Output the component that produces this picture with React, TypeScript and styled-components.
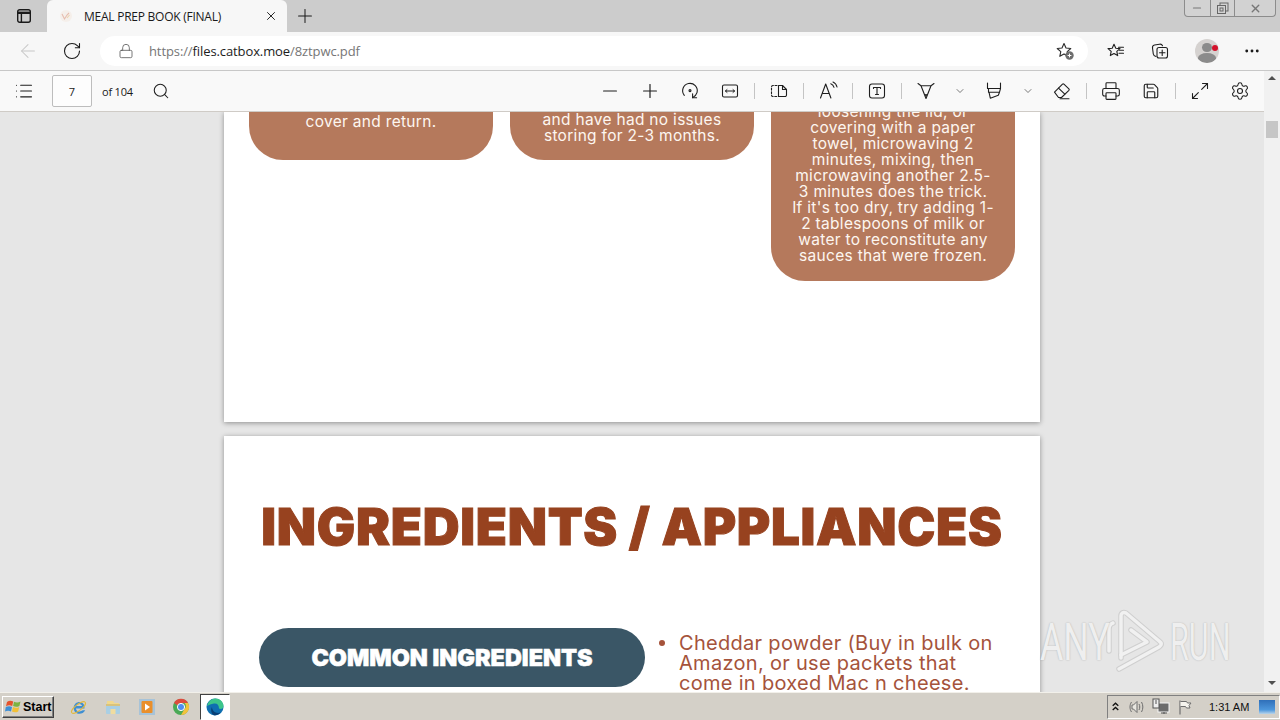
import styled, { createGlobalStyle } from 'styled-components';
import type { ReactNode } from 'react';
import {
  ArrowLeft,
  ChevronDown,
  List,
  Lock,
  Maximize2,
  Minus,
  MoreHorizontal,
  Plus,
  Printer,
  RotateCw,
  Save,
  Search,
  Settings,
  X
} from 'lucide-react';

const GlobalStyle = createGlobalStyle`
  html, body {
    margin: 0;
    padding: 0;
    width: 1280px;
    height: 720px;
    overflow: hidden;
  }
  * { box-sizing: border-box; }
`;

const Screen = styled.div`
  width: 1280px;
  height: 720px;
  display: flex;
  flex-direction: column;
  overflow: hidden;
  font-family: 'Open Sans', 'Liberation Sans', sans-serif;
  color: #1a1a1a;
`;

/* tab strip */
const TabStrip = styled.div`
  height: 32px;
  flex: none;
  background: #cccccc;
  display: flex;
  align-items: flex-end;
  padding-left: 12px;
`;

const TabActions = styled.div`
  width: 35px;
  height: 32px;
  display: flex;
  align-items: center;
  padding-left: 4px;
`;

const Tab = styled.div`
  width: 240px;
  height: 32px;
  background: #f7f7f7;
  border-radius: 6px 6px 0 0;
  display: flex;
  align-items: center;
  padding: 0 9px 0 12px;
  font-size: 12px;
  letter-spacing: -0.25px;
`;

const TabTitle = styled.span`
  margin-left: 11px;
  flex: 1;
`;

const NewTab = styled.div`
  width: 36px;
  height: 32px;
  display: flex;
  align-items: center;
  justify-content: center;
`;

const Spacer = styled.div`
  flex: 1;
`;

const WindowButtons = styled.div`
  align-self: flex-start;
  margin-right: 4px;
  width: 92px;
  height: 17px;
  display: flex;
  border: 1px solid #8c8c8c;
  border-top: none;
  border-radius: 0 0 4px 4px;
  background: #d2d2d2;
`;

const WindowButton = styled.div<{ $wide?: boolean }>`
  width: ${p => (p.$wide ? 41 : 25)}px;
  display: flex;
  align-items: center;
  justify-content: center;
  & + & {
    border-left: 1px solid #8c8c8c;
  }
`;

/* address bar */
const AddressBar = styled.div`
  height: 39px;
  flex: none;
  background: #f7f7f7;
  border-bottom: 1px solid #c8c8c8;
  display: flex;
  align-items: center;
  padding-bottom: 1px;
`;

const NavButton = styled.div<{ $w: number }>`
  width: ${p => p.$w}px;
  flex: none;
  height: 30px;
  display: flex;
  align-items: center;
  justify-content: center;
  position: relative;
`;

const UrlPill = styled.div`
  width: 988px;
  height: 30px;
  margin-left: 12px;
  border-radius: 15px;
  background: #ffffff;
  display: flex;
  align-items: center;
  padding-left: 18px;
  flex: none;
`;

const UrlText = styled.div`
  margin-left: 15px;
  flex: 1;
  font-size: 13px;
  letter-spacing: -0.1px;
  color: #767676;
  b {
    font-weight: 400;
    color: #1c1c1c;
  }
`;

const Avatar = styled.div`
  width: 24px;
  height: 24px;
  border-radius: 50%;
  background: #d5d2d0;
  overflow: hidden;
  display: flex;
  flex-direction: column;
  align-items: center;
  padding-top: 4px;
  &::before {
    content: '';
    width: 10px;
    height: 10px;
    border-radius: 50%;
    background: #8b8b8b;
  }
  &::after {
    content: '';
    margin-top: 1px;
    width: 18px;
    height: 10px;
    border-radius: 50%;
    background: #8b8b8b;
  }
`;

const AvatarDot = styled.span`
  position: absolute;
  left: 36px;
  top: 9px;
  width: 6px;
  height: 6px;
  border-radius: 50%;
  background: #d3122b;
`;

/* content */
const Body = styled.div`
  flex: 1;
  min-height: 0;
  display: flex;
`;

const Main = styled.div`
  width: 1264px;
  display: flex;
  flex-direction: column;
  min-height: 0;
`;

const PdfToolbar = styled.div`
  height: 41px;
  flex: none;
  background: #f9f9f9;
  border-bottom: 1px solid #cfcbc6;
  display: flex;
  align-items: center;
  padding: 0 4px;
  font-size: 11px;
`;

const ToolButton = styled.div<{ $narrow?: boolean }>`
  width: ${p => (p.$narrow ? 28 : 40)}px;
  height: 32px;
  flex: none;
  display: flex;
  align-items: center;
  justify-content: center;
`;

const PageInput = styled.div`
  width: 40px;
  height: 32px;
  margin-left: 8px;
  border: 1px solid #bdbdbd;
  border-radius: 2px;
  background: #fdfdfd;
  display: flex;
  align-items: center;
  justify-content: center;
`;

const PageCount = styled.span`
  margin: 0 8px 0 10px;
  letter-spacing: -0.2px;
`;

const ToolSep = styled.div`
  width: 1px;
  height: 16px;
  margin: 0 4px;
  background: #c4c4c4;
  flex: none;
`;

const Viewer = styled.div`
  flex: 1;
  min-height: 0;
  background: #e6e6e6;
  overflow: hidden;
  display: flex;
  flex-direction: column;
  align-items: center;
  gap: 14px;
  position: relative;
`;

const Page = styled.section<{ $h: number }>`
  width: 816px;
  height: ${p => p.$h}px;
  flex: none;
  background: #ffffff;
  box-shadow: 0 1px 5px rgba(0, 0, 0, 0.38);
`;

const CardRow = styled.div`
  display: flex;
  gap: 17px;
  align-items: flex-start;
  padding: 0 25px;
  margin-top: -40px;
`;

const Card = styled.div<{ $h: number; $pad: number }>`
  width: 244px;
  height: ${p => p.$h}px;
  padding-bottom: ${p => p.$pad}px;
  background: #b5795c;
  border-radius: 0 0 34px 34px;
  color: #fdf6f0;
  display: flex;
  flex-direction: column;
  justify-content: flex-end;
  align-items: center;
  font-family: Inter, 'Liberation Sans', sans-serif;
  font-size: 15.5px;
  letter-spacing: 0.3px;
  line-height: 16px;
`;

const Title = styled.h1`
  margin: 0;
  padding-top: 58px;
  height: 155px;
  text-align: center;
  white-space: nowrap;
  font-family: Inter, 'Liberation Sans', sans-serif;
  font-weight: 900;
  font-size: 51px;
  letter-spacing: 0.7px;
  line-height: 66px;
  color: #97421f;
  -webkit-text-stroke: 1px #97421f;
`;

const IngredientRow = styled.div`
  display: flex;
  align-items: flex-start;
  padding: 37px 0 0 35px;
`;

const Pill = styled.div`
  width: 386px;
  height: 59px;
  flex: none;
  border-radius: 30px;
  background: #3a5666;
  color: #ffffff;
  display: flex;
  align-items: center;
  justify-content: center;
  font-family: Inter, 'Liberation Sans', sans-serif;
  font-weight: 900;
  font-size: 23.4px;
  -webkit-text-stroke: 0.5px #ffffff;
`;

const Bullets = styled.ul`
  margin: 5px 0 0 14px;
  padding: 0;
  list-style: none;
  font-family: Inter, 'Liberation Sans', sans-serif;
  font-size: 20px;
  letter-spacing: 0.3px;
  line-height: 20px;
  color: #a5533b;
`;

const BulletItem = styled.li`
  display: flex;
  gap: 14px;
`;

const Dot = styled.span`
  width: 6px;
  height: 6px;
  margin-top: 7px;
  flex: none;
  border-radius: 50%;
  background: #a5533b;
`;

const Line = styled.span`
  display: block;
  white-space: nowrap;
`;

const Watermark = styled.div`
  position: absolute;
  left: 1040px;
  top: 497px;
  width: 196px;
  height: 66px;
  display: flex;
  align-items: center;
  font-family: Roboto, 'Liberation Sans', sans-serif;
  font-weight: 400;
  font-size: 51px;
  color: #efefef;
  text-shadow: 0 0 2px rgba(0, 0, 0, 0.25);
`;

const WatermarkWord = styled.span<{ $squeeze: number; $gap?: number }>`
  display: block;
  transform: scaleX(${p => p.$squeeze});
  transform-origin: left center;
  width: 64px;
  margin-left: ${p => p.$gap ?? 0}px;
  white-space: nowrap;
`;

const Scrollbar = styled.div`
  width: 16px;
  flex: none;
  background: #f1f1f1;
  display: flex;
  flex-direction: column;
  align-items: center;
  padding-top: 5px;
`;

const ScrollThumb = styled.div`
  width: 12px;
  height: 17px;
  margin-top: 41px;
  background: #c6c6c6;
`;

const Arrow = styled.div<{ $down?: boolean }>`
  width: 0;
  height: 0;
  border-left: 4px solid transparent;
  border-right: 4px solid transparent;
  ${p => (p.$down ? 'border-top: 4px solid #505050;' : 'border-bottom: 4px solid #505050;')}
  margin-top: ${p => (p.$down ? 'auto' : '0')};
  margin-bottom: ${p => (p.$down ? '7px' : '0')};
`;

/* taskbar */
const Taskbar = styled.div`
  height: 28px;
  flex: none;
  background: #d4d0c8;
  border-top: 1px solid #f2f0ea;
  display: flex;
  align-items: center;
  padding-left: 2px;
  font-family: 'Liberation Sans', sans-serif;
`;

const StartButton = styled.div`
  width: 52px;
  height: 22px;
  display: flex;
  align-items: center;
  gap: 0;
  padding-left: 2px;
  background: #d4d0c8;
  border: 1px solid;
  border-color: #ffffff #404040 #404040 #ffffff;
  box-shadow: inset -1px -1px 0 #808080;
  font-weight: 700;
  font-size: 12.5px;
  color: #000000;
`;

const QuickLaunch = styled.div`
  display: flex;
  align-items: center;
  margin-left: 8px;
`;

const TaskIcon = styled.div<{ $active?: boolean }>`
  width: 34px;
  height: 26px;
  display: flex;
  align-items: center;
  justify-content: center;
  ${p =>
    p.$active &&
    `
    width: 30px;
    margin-left: 2px;
    background: #ffffff;
    border: 1px solid;
    border-color: #404040 #ffffff #ffffff #404040;
  `}
`;

const Tray = styled.div`
  margin-left: auto;
  width: 173px;
  height: 24px;
  border: 1px solid;
  border-color: #808080 #ffffff #ffffff #808080;
  display: flex;
  align-items: center;
  font-size: 11px;
  color: #111111;
`;

const TrayIcon = styled.div<{ $w: number }>`
  width: ${p => p.$w}px;
  flex: none;
  display: flex;
  align-items: center;
  justify-content: center;
`;

const Clock = styled.span`
  margin-left: 10px;
  white-space: nowrap;
`;

const DesktopTile = styled.div`
  width: 16px;
  height: 14px;
  margin-left: 10px;
  flex: none;
  background: linear-gradient(#2f6fb9, #4d97dc 70%, #b9d4ea);
`;

const Glyph = ({ children, size = 20 }: { children: ReactNode; size?: number }) => (
  <svg
    width={size}
    height={size}
    viewBox='0 0 20 20'
    fill='none'
    stroke='#1f1f1f'
    strokeWidth={1.1}
    strokeLinecap='round'
    strokeLinejoin='round'
  >
    {children}
  </svg>
);

const TabsIcon = () => (
  <svg width={16} height={16} viewBox='0 0 16 16' fill='none' stroke='#1a1a1a' strokeWidth={1.4}>
    <rect x='1.7' y='1.7' width='12.6' height='12.6' rx='2' />
    <path d='M1.7 4.8h12.6' strokeWidth={2.4} />
    <path d='M5.4 4.8v9.5' />
  </svg>
);

const Favicon = () => (
  <svg width={14} height={14} viewBox='0 0 14 14' fill='none'>
    <circle cx='7' cy='7' r='6' fill='#f5efea' />
    <path d='M3 5l2.5 5L8 6l2-2' stroke='#e6bcae' strokeWidth={1.1} />
    <path d='M8 9l2.5-3' stroke='#ecd3ae' strokeWidth={1.1} />
  </svg>
);

const StarAddIcon = () => (
  <svg width={20} height={20} viewBox='0 0 20 20' fill='none'>
    <path
      d='M9 2.6l2 4.4 4.8.5-3.6 3.1 1 4.7L9 12.9l-4.2 2.4 1-4.7L2.2 7.5 7 7z'
      stroke='#2a2a2a'
      strokeWidth={1.1}
      strokeLinejoin='round'
    />
    <circle cx='14.5' cy='14.5' r='4.2' fill='#6d6d6d' />
    <path d='M14.5 12.6v3.8M12.6 14.5h3.8' stroke='#fff' strokeWidth={1} />
  </svg>
);

const FavoritesIcon = () => (
  <Glyph>
    <path d='M8 3.2l1.8 4 4.2.4-3.2 2.8.9 4.2L8 12.5l-3.7 2.1.9-4.2L2 7.6l4.2-.4z' />
    <path d='M12.5 6.2h5M13.5 9.2h4M13 12.2h4.5' />
  </Glyph>
);

const CollectionsIcon = () => (
  <Glyph>
    <path d='M6 15.5c-1.5-.3-2.4-1-2.7-2.5L2.5 7c-.2-1.6.6-2.7 2-3l5-.8c1.4-.2 2.5.3 3 1.6' />
    <rect x='7' y='6.5' width='10.5' height='10.5' rx='2' />
    <path d='M12.2 9v5.5M9.5 11.8H15' />
  </Glyph>
);

const RotateIcon = () => (
  <Glyph>
    <path d='M4.300 14.300A7.300 7.300 0 1 1 17 11.600c-.5 1.800-2 3.600-4.300 5' />
    <path d='M12.600 12.800v4h4' />
    <circle cx='10' cy='9.600' r='1' />
  </Glyph>
);

const FitWidthIcon = () => (
  <Glyph>
    <rect x='2.5' y='4' width='15' height='12' rx='1.5' />
    <path d='M5.5 10h9' strokeWidth={1} />
    <path d='M7 8.6L5.4 10 7 11.4M13 8.6l1.6 1.4-1.6 1.4' strokeWidth={1} />
  </Glyph>
);

const PageViewIcon = () => (
  <Glyph>
    <path d='M8 4.5H4a1.5 1.5 0 0 0-1.5 1.5v8A1.5 1.5 0 0 0 4 15.500h4' strokeDasharray='2 1.6' />
    <path d='M9.500 4.500h4l4 4v5.500a1.500 1.500 0 0 1-1.500 1.500H9.500z' />
    <path d='M13.500 4.500v4h4' />
  </Glyph>
);

const ReadAloudIcon = () => (
  <Glyph>
    <path d='M2.500 17l5.200-14 5.200 14M4.300 12.500h6.800' />
    <path d='M12.800 2.800c1.600.6 2.700 1.800 3.200 3.500M15 1c2 .9 3.500 2.500 4 5' />
  </Glyph>
);

const TextBoxIcon = () => (
  <Glyph>
    <rect x='2.500' y='3' width='15' height='14' rx='2.500' />
    <path d='M6.500 7.500V6.500h7v1M10 6.500v7M8.500 13.500h3' />
  </Glyph>
);

const DrawIcon = () => (
  <Glyph>
    <path d='M2 2.500l3 2.200h10l3-2.200M5 4.700l5 12.800 5-12.800' />
    <circle cx='10' cy='14' r='.5' fill='#1f1f1f' />
  </Glyph>
);

const HighlightIcon = () => (
  <Glyph>
    <path d='M3.500 2v5.500h13V2' />
    <path d='M4.500 7.500v3.700h11l1-3.700M5 11.200l1.300 6 8-3 1.200-3' />
  </Glyph>
);

const EraserIcon = () => (
  <Glyph>
    <path d='M2.500 11.200l8-8a1 1 0 0 1 1.400 0l5 4.700a1 1 0 0 1 0 1.400l-7.400 7.200h-3z' />
    <path d='M6.500 7.200l6.300 6M8 17.800h9' />
  </Glyph>
);

const StartFlag = () => (
  <svg width={18} height={16} viewBox='0 0 18 16'>
    <path d='M2 3c2-1.500 4-1.500 6.200-.6L7.200 7C5.200 6 3.200 6 1 7.200z' fill='#e5532d' />
    <path d='M9 2.700c2.200 1 4.200 1 6.500-.2L14.400 7c-2.200 1.100-4.300 1.100-6.300.1z' fill='#7cb342' />
    <path d='M.8 8c2.200-1.100 4.200-1.100 6.200-.1L6 12.400C4 11.400 2 11.400 0 12.600z' fill='#3d8fd6' />
    <path d='M8 8c2 1 4 1 6.200-.1l-1 4.500c-2.200 1.100-4.200 1.100-6.200.1z' fill='#f2c037' />
  </svg>
);

const IeIcon = () => (
  <svg width={18} height={18} viewBox='0 0 18 18' fill='none'>
    <path
      d='M14.500 10.500H6c0 2.800 3.800 4 6.800 1.800h2.400c-2.500 5.300-11.500 4.800-11.500-2.300 0-6 7.200-7.800 10-3.800.7 1.200.8 2.800.8 4.300z'
      fill='#3f8fd2'
    />
    <path d='M6.200 8h5.800c-.2-2.800-5.400-2.800-5.800 0z' fill='#d4d0c8' />
    <ellipse cx='8.500' cy='9.500' rx='8.500' ry='3' transform='rotate(-38 8.500 9.500)' stroke='#e2b93b' strokeWidth={1} />
  </svg>
);

const FolderIcon = () => (
  <svg width={18} height={18} viewBox='0 0 18 18'>
    <path d='M3 3h6l1.500 2H15v3H3z' fill='#f1d98d' />
    <rect x='2' y='6' width='14' height='10' rx='1' fill='#a9cfe4' />
    <path d='M6.500 16v-5h5v5z' fill='#f0dca0' />
    <rect x='2' y='6' width='14' height='2' fill='#d8c27c' />
  </svg>
);

const MediaIcon = () => (
  <svg width={18} height={18} viewBox='0 0 18 18'>
    <rect x='1' y='1' width='16' height='16' fill='#a7c3d8' />
    <rect x='3.500' y='3' width='11' height='12' rx='1' fill='#ea8f2b' />
    <path d='M7 5.500l5 3.500-5 3.500z' fill='#fff' />
  </svg>
);

const ChromeIcon = () => (
  <svg width={18} height={18} viewBox='0 0 18 18'>
    <circle cx='9' cy='9' r='8' fill='#4aa956' />
    <path d='M2 5a8 8 0 0 1 14 0H9a4 4 0 0 0-3.600 2.200z' fill='#dd4b3e' />
    <path d='M16 5a8 8 0 0 1-7 12l3.500-6a4 4 0 0 0 0-6z' fill='#f3c23c' />
    <circle cx='9' cy='9' r='3.600' fill='#4f8ef0' stroke='#fff' strokeWidth={1} />
  </svg>
);

const EdgeIcon = () => (
  <svg width={18} height={18} viewBox='0 0 18 18'>
    <circle cx='9' cy='9' r='8.500' fill='#0f6fb0' />
    <path d='M1 8c1-4.500 4.500-7.500 8.500-7.500 4.500 0 8 3.500 8 7.500 0 2.500-2.500 3.500-4.500 2.500C13 7 11 5 8 5.500 5 6 3 7 1 8z' fill='#3cc58a' />
    <path d='M6 9c0 4 4 7 8.500 5.500C13 16.500 10.500 17.500 8 17.200 5 16 4.500 11 6 9z' fill='#0a3f74' />
  </svg>
);

const TrayChevrons = () => (
  <svg width={7} height={9} viewBox='0 0 7 9' fill='none' stroke='#111' strokeWidth={1.3}>
    <path d='M.7 3.800l2.800-2.600 2.800 2.600M.7 8l2.800-2.600L6.300 8' />
  </svg>
);

const TrayFlag = () => (
  <svg width={16} height={16} viewBox='0 0 16 16' fill='none' stroke='#6e6e6e'>
    <path d='M3 1.500v14' strokeWidth={1.2} />
    <path d='M3.500 2.500h6l1 1.500h3.500l-2 2.500 1 2.500H9.500l-1-1.500h-5' fill='#f6f4ee' />
  </svg>
);

const TrayNetwork = () => (
  <svg width={18} height={18} viewBox='0 0 18 18'>
    <rect x='6' y='5' width='11' height='9' fill='#6c6c6c' stroke='#f5f5f5' />
    <path d='M9 15h6M12 14v2' stroke='#555' />
    <rect x='1' y='1' width='6' height='9' fill='#eeeeee' stroke='#555' />
    <path d='M3 3h2M3 5h2' stroke='#555' />
  </svg>
);

const TraySpeaker = () => (
  <svg width={18} height={16} viewBox='0 0 18 16' fill='none' stroke='#6e6e6e'>
    <path d='M3.500 3c-2 3-2 7 0 10' />
    <path d='M4 6h1.500L9 2.500v11L5.500 10H4z' fill='#e8e6e0' />
    <path d='M11 5c1 1.800 1 4.200 0 6M13.500 3c1.800 3 1.800 7 0 10' />
  </svg>
);

const AnyRunLogo = () => (
  <svg width={64} height={66} viewBox='0 0 64 66' fill='none' strokeWidth={3.5} strokeLinejoin='round' strokeLinecap='round'>
    <g stroke='#cfcfcf' strokeWidth={5.5}>
      <path d='M9 14c-3 1-4 3-4 6v22' />
      <path d='M15 60l40-22c3-2 3-4 0-6L22 4c-3-1-5 0-5 3v42' />
      <path d='M17 46l26-13-16-12' />
    </g>
    <g stroke='#f1f1f1'>
      <path d='M9 14c-3 1-4 3-4 6v22' />
      <path d='M15 60l40-22c3-2 3-4 0-6L22 4c-3-1-5 0-5 3v42' />
      <path d='M17 46l26-13-16-12' />
    </g>
  </svg>
);

const leftCard = ['cover and return.'];
const middleCard = ['and have had no issues', 'storing for 2-3 months.'];
const rightCard = [
  'loosening the lid, or',
  'covering with a paper',
  'towel, microwaving 2',
  'minutes, mixing, then',
  'microwaving another 2.5-',
  '3 minutes does the trick.',
  "If it's too dry, try adding 1-",
  '2 tablespoons of milk or',
  'water to reconstitute any',
  'sauces that were frozen.'
];
const cheddar = [
  'Cheddar powder (Buy in bulk on',
  'Amazon, or use packets that',
  'come in boxed Mac n cheese.'
];

const iconProps = { size: 20, strokeWidth: 1.3, color: '#1f1f1f' };

const App = () => {
  return (
    <Screen>
      <GlobalStyle />
      <TabStrip>
        <TabActions>
          <TabsIcon />
        </TabActions>
        <Tab>
          <Favicon />
          <TabTitle>MEAL PREP BOOK (FINAL)</TabTitle>
          <X size={14} strokeWidth={1.6} color='#1a1a1a' />
        </Tab>
        <NewTab>
          <Plus size={22} strokeWidth={1.1} color='#1a1a1a' />
        </NewTab>
        <Spacer />
        <WindowButtons>
          <WindowButton>
            <Minus size={12} strokeWidth={2.4} color='#777' />
          </WindowButton>
          <WindowButton>
            <svg width={13} height={13} viewBox='0 0 13 13' fill='none' stroke='#666'>
              <rect x='4' y='1' width='8' height='8' />
              <rect x='1.500' y='3.500' width='8' height='8' fill='#d2d2d2' />
              <rect x='4' y='6' width='3' height='3' />
            </svg>
          </WindowButton>
          <WindowButton $wide>
            <X size={13} strokeWidth={2.6} color='#777' />
          </WindowButton>
        </WindowButtons>
      </TabStrip>

      <AddressBar>
        <NavButton $w={56}>
          <ArrowLeft size={22} strokeWidth={1.1} color='#c8c8c8' />
        </NavButton>
        <NavButton $w={32}>
          <RotateCw size={20} strokeWidth={1.3} color='#1a1a1a' />
        </NavButton>
        <UrlPill>
          <Lock size={16} strokeWidth={1.2} color='#555' />
          <UrlText>
            https://<b>files.catbox.moe</b>/8ztpwc.pdf
          </UrlText>
          <NavButton $w={46}>
            <StarAddIcon />
          </NavButton>
        </UrlPill>
        <NavButton $w={56}>
          <FavoritesIcon />
        </NavButton>
        <NavButton $w={32}>
          <CollectionsIcon />
        </NavButton>
        <NavButton $w={62}>
          <Avatar />
          <AvatarDot />
        </NavButton>
        <NavButton $w={28}>
          <MoreHorizontal size={18} strokeWidth={1.8} color='#1a1a1a' />
        </NavButton>
      </AddressBar>

      <Body>
        <Main>
          <PdfToolbar>
            <ToolButton>
              <List {...iconProps} />
            </ToolButton>
            <PageInput>7</PageInput>
            <PageCount>of 104</PageCount>
            <ToolButton>
              <Search {...iconProps} size={18} strokeWidth={1.4} />
            </ToolButton>
            <Spacer />
            <ToolButton>
              <Minus {...iconProps} size={22} />
            </ToolButton>
            <ToolButton>
              <Plus {...iconProps} size={22} />
            </ToolButton>
            <ToolButton>
              <RotateIcon />
            </ToolButton>
            <ToolButton>
              <FitWidthIcon />
            </ToolButton>
            <ToolSep />
            <ToolButton>
              <PageViewIcon />
            </ToolButton>
            <ToolSep />
            <ToolButton>
              <ReadAloudIcon />
            </ToolButton>
            <ToolSep />
            <ToolButton>
              <TextBoxIcon />
            </ToolButton>
            <ToolSep />
            <ToolButton>
              <DrawIcon />
            </ToolButton>
            <ToolButton $narrow>
              <ChevronDown size={12} strokeWidth={1.4} color='#444' />
            </ToolButton>
            <ToolButton>
              <HighlightIcon />
            </ToolButton>
            <ToolButton $narrow>
              <ChevronDown size={12} strokeWidth={1.4} color='#444' />
            </ToolButton>
            <ToolButton>
              <EraserIcon />
            </ToolButton>
            <ToolSep />
            <ToolButton>
              <Printer {...iconProps} />
            </ToolButton>
            <ToolButton>
              <Save {...iconProps} size={18} strokeWidth={1.5} />
            </ToolButton>
            <ToolSep />
            <ToolButton>
              <Maximize2 {...iconProps} />
            </ToolButton>
            <ToolButton>
              <Settings {...iconProps} />
            </ToolButton>
          </PdfToolbar>

          <Viewer>
            <Page $h={310}>
              <CardRow>
                <Card $h={88} $pad={30}>
                  {leftCard.map(line => (
                    <Line key={line}>{line}</Line>
                  ))}
                </Card>
                <Card $h={88} $pad={16}>
                  {middleCard.map(line => (
                    <Line key={line}>{line}</Line>
                  ))}
                </Card>
                <Card $h={209} $pad={17}>
                  {rightCard.map(line => (
                    <Line key={line}>{line}</Line>
                  ))}
                </Card>
              </CardRow>
            </Page>
            <Page $h={700}>
              <Title>INGREDIENTS / APPLIANCES</Title>
              <IngredientRow>
                <Pill>COMMON INGREDIENTS</Pill>
                <Bullets>
                  <BulletItem>
                    <Dot />
                    <div>
                      {cheddar.map(line => (
                        <Line key={line}>{line}</Line>
                      ))}
                    </div>
                  </BulletItem>
                </Bullets>
              </IngredientRow>
            </Page>
            <Watermark>
              <WatermarkWord $squeeze={0.7}>ANY</WatermarkWord>
              <AnyRunLogo />
              <WatermarkWord $squeeze={0.6} $gap={2}>RUN</WatermarkWord>
            </Watermark>
          </Viewer>
        </Main>
        <Scrollbar>
          <Arrow />
          <ScrollThumb />
          <Arrow $down />
        </Scrollbar>
      </Body>

      <Taskbar>
        <StartButton>
          <StartFlag />
          Start
        </StartButton>
        <QuickLaunch>
          <TaskIcon>
            <IeIcon />
          </TaskIcon>
          <TaskIcon>
            <FolderIcon />
          </TaskIcon>
          <TaskIcon>
            <MediaIcon />
          </TaskIcon>
          <TaskIcon>
            <ChromeIcon />
          </TaskIcon>
          <TaskIcon $active>
            <EdgeIcon />
          </TaskIcon>
        </QuickLaunch>
        <Tray>
          <TrayIcon $w={15}>
            <TrayChevrons />
          </TrayIcon>
          <TrayIcon $w={28}>
            <TraySpeaker />
          </TrayIcon>
          <TrayIcon $w={20}>
            <TrayNetwork />
          </TrayIcon>
          <TrayIcon $w={28}>
            <TrayFlag />
          </TrayIcon>
          <Clock>1:31 AM</Clock>
          <DesktopTile />
        </Tray>
      </Taskbar>
    </Screen>
  );
};

export default App;
